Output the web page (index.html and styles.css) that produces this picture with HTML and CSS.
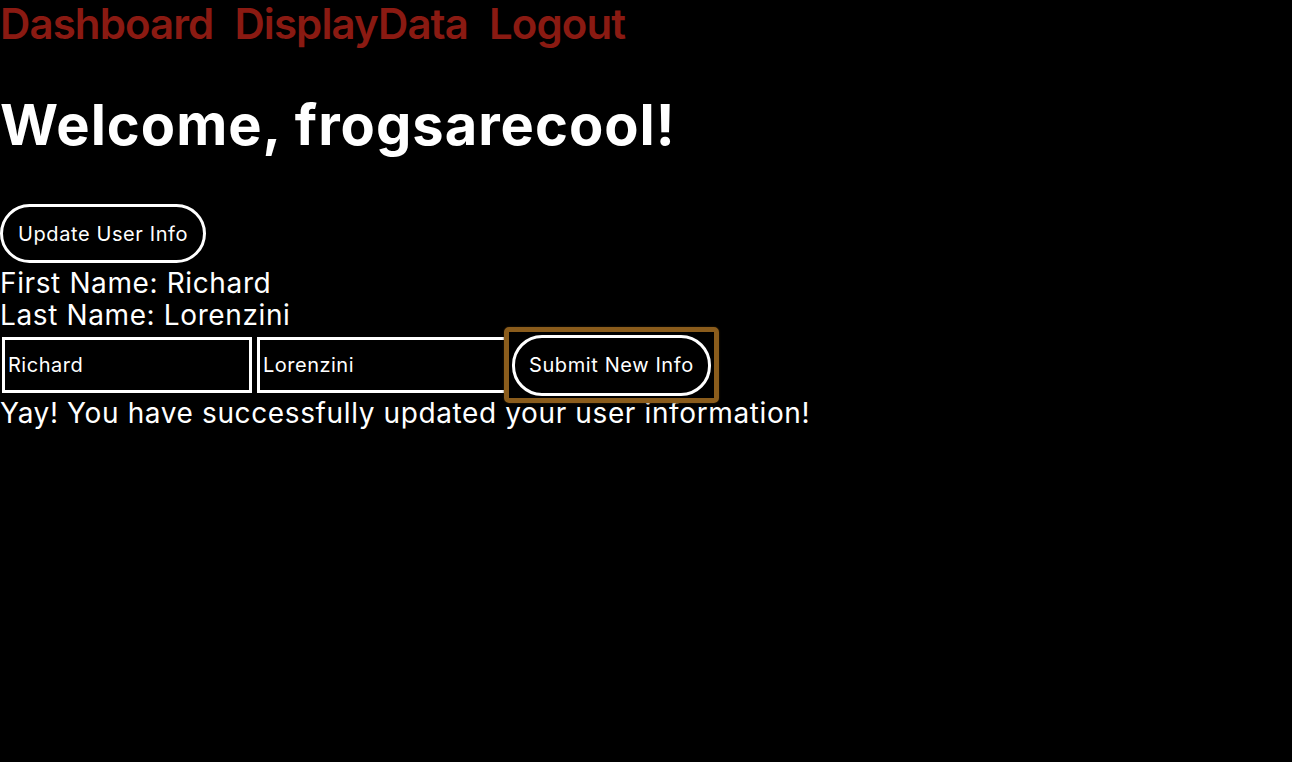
FILE: index.html
```html
<!DOCTYPE html>
<html>
<head>
<meta charset="utf-8">
<link rel="stylesheet" href="styles.css">
</head>
<body>
<nav class="nav">
  <a class="nav-link" href="#">Dashboard</a>
  <a class="nav-link" href="#">DisplayData</a>
  <a class="nav-link" href="#">Logout</a>
</nav>
<h1 class="title">Welcome, frogsarecool!</h1>
<button class="pill">Update User Info</button>
<div class="info first">First Name: Richard</div>
<div class="info">Last Name: Lorenzini</div>
<form class="row">
  <input class="field" type="text" value="Richard">
  <input class="field" type="text" value="Lorenzini">
  <span class="focus-wrap"><button type="button" class="pill submit">Submit New Info</button></span>
</form>
<div class="info">Yay! You have successfully updated your user information!</div>
</body>
</html>
```

FILE: styles.css
```css
html, body {
  margin: 0;
  background: #000;
  color: #fff;
  font-family: Inter, "Noto Sans", sans-serif;
}
.nav {
  display: flex;
  gap: 21px;
  height: 48px;
  align-items: flex-start;
}
.nav-link {
  color: #8a1a12;
  text-decoration: none;
  font-size: 42px;
  font-weight: 600;
  line-height: 48px;
  letter-spacing: -0.9px;
}
.title {
  margin: 43px 0 0 0;
  font-size: 56px;
  font-weight: 700;
  line-height: 68px;
  letter-spacing: 1px;
}
.pill {
  display: block;
  margin-top: 45px;
  height: 59px;
  padding: 0 15px;
  background: #000;
  color: #fff;
  border: 3px solid #fff;
  border-radius: 30px;
  font-family: inherit;
  font-size: 20px;
  letter-spacing: 0.6px;
}
.info {
  font-size: 28px;
  line-height: 32px;
  letter-spacing: 0.62px;
}
.info.first { margin-top: 4px; }
.row {
  display: flex;
  align-items: center;
  gap: 5px;
  margin: 2px 0 0 0;
  height: 64px;
  padding-left: 2px;
}
.field {
  box-sizing: border-box;
  width: 250px;
  height: 56px;
  background: #000;
  color: #fff;
  border: 3px solid #fff;
  padding: 0 3px;
  font-family: inherit;
  font-size: 20px;
  letter-spacing: 0.5px;
}
.focus-wrap {
  position: relative;
  display: block;
}
.focus-wrap::after {
  content: "";
  position: absolute;
  left: -8px;
  right: -8px;
  top: -8px;
  bottom: -7px;
  border: 5px solid #8a5c1c;
  border-radius: 5px;
  box-shadow: 0 0 2px #3a2608;
  pointer-events: none;
}
.submit {
  margin-top: 0;
  height: 61px;
  padding: 0 14px;
}
```
